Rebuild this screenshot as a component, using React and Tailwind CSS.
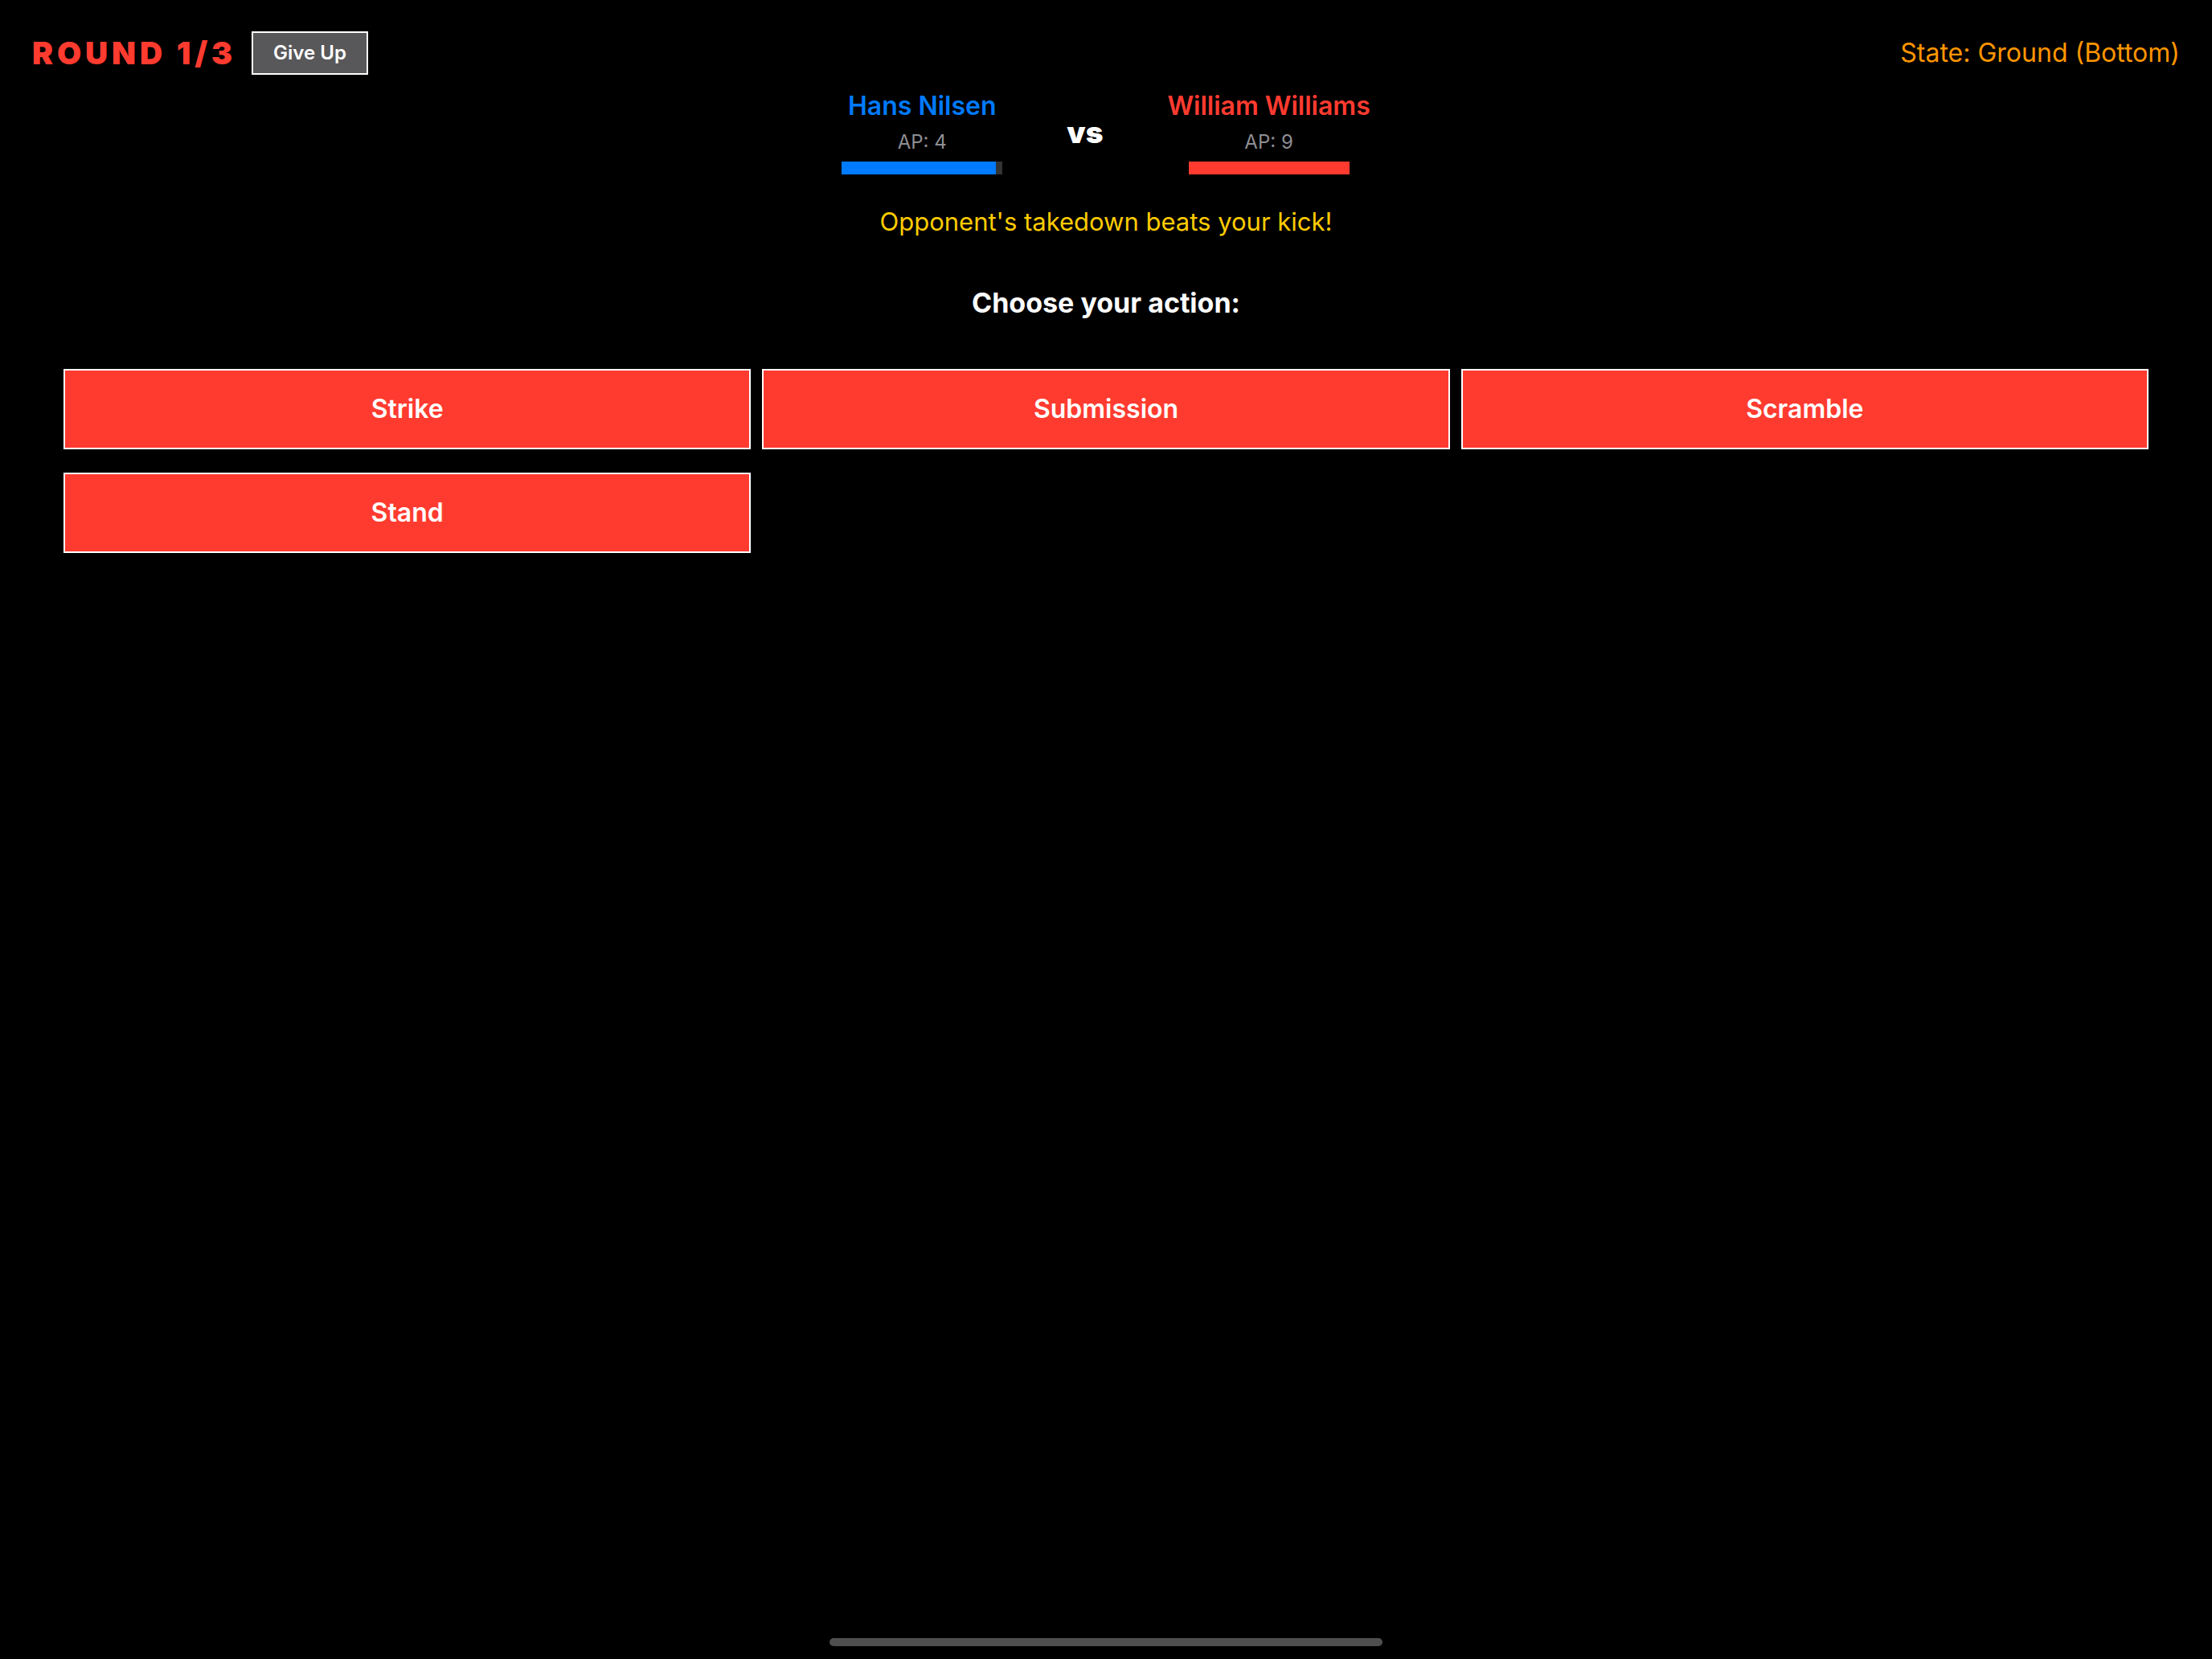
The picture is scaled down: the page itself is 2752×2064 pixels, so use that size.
import React from 'react';

const ACTIONS = ['Strike', 'Submission', 'Scramble', 'Stand'];

// one side of the matchup: name, action points and the AP bar
const Fighter = ({ name, ap, color, barColor, fill }) => (
	<div className="flex flex-col items-center">
		<div className={`text-[32px] leading-[37px] font-semibold ${color}`}>{name}</div>
		<div className="mt-[12px] text-[24px] leading-[29px] text-[#8e8e93]">AP: {ap}</div>
		<div className="mt-[10px] h-[16px] w-[200px] bg-[#333333] flex">
			<div className={`h-full ${barColor}`} style={{ width: `${fill * 100}%` }} />
		</div>
	</div>
);

export default function App() {
	return (
		<div
			className="min-h-[2064px] w-full bg-black text-white flex flex-col"
			style={{ fontFamily: 'Inter, "Noto Sans", sans-serif' }}
		>
			{/* top bar */}
			<div className="flex items-center justify-between px-[40px] pt-[39px]">
				<div className="flex items-center gap-[19px]">
					<div className="text-[39px] leading-[54px] font-black tracking-[0.125em] text-[#ff3b30]">
						ROUND 1/3
					</div>
					<button className="h-[54px] px-[25px] bg-[#58585a] border-2 border-white text-[24px] font-semibold text-white">
						Give Up
					</button>
				</div>
				<div className="text-[32px] leading-[40px] text-[#ff9500]">State: Ground (Bottom)</div>
			</div>

			{/* fighters */}
			<div className="mt-[20px] flex items-center justify-center gap-[80px]">
				<Fighter name="Hans Nilsen" ap={4} color="text-[#007aff]" barColor="bg-[#007aff]" fill={0.96} />
				<div className="text-[37px] leading-[48px] font-black text-white">vs</div>
				<Fighter name="William Williams" ap={9} color="text-[#ff3b30]" barColor="bg-[#ff3b30]" fill={1} />
			</div>

			<div className="mt-[41px] text-center text-[31px] leading-[36px] text-[#ffcc00]">
				Opponent's takedown beats your kick!
			</div>

			<div className="mt-[63px] text-center text-[34px] leading-[40px] font-bold text-white">
				Choose your action:
			</div>

			{/* action buttons */}
			<div className="mt-[62px] px-[79px] grid grid-cols-3 gap-x-[14px] gap-y-[29px]">
				{ACTIONS.map((a) => (
					<button
						key={a}
						className="h-[100px] bg-[#ff3b30] border-2 border-white text-[32px] font-semibold text-white"
					>
						{a}
					</button>
				))}
			</div>

			{/* home indicator */}
			<div className="mt-auto mb-[16px] self-center h-[10px] w-[688px] rounded-full bg-[#4f4f4f]" />
		</div>
	);
}
